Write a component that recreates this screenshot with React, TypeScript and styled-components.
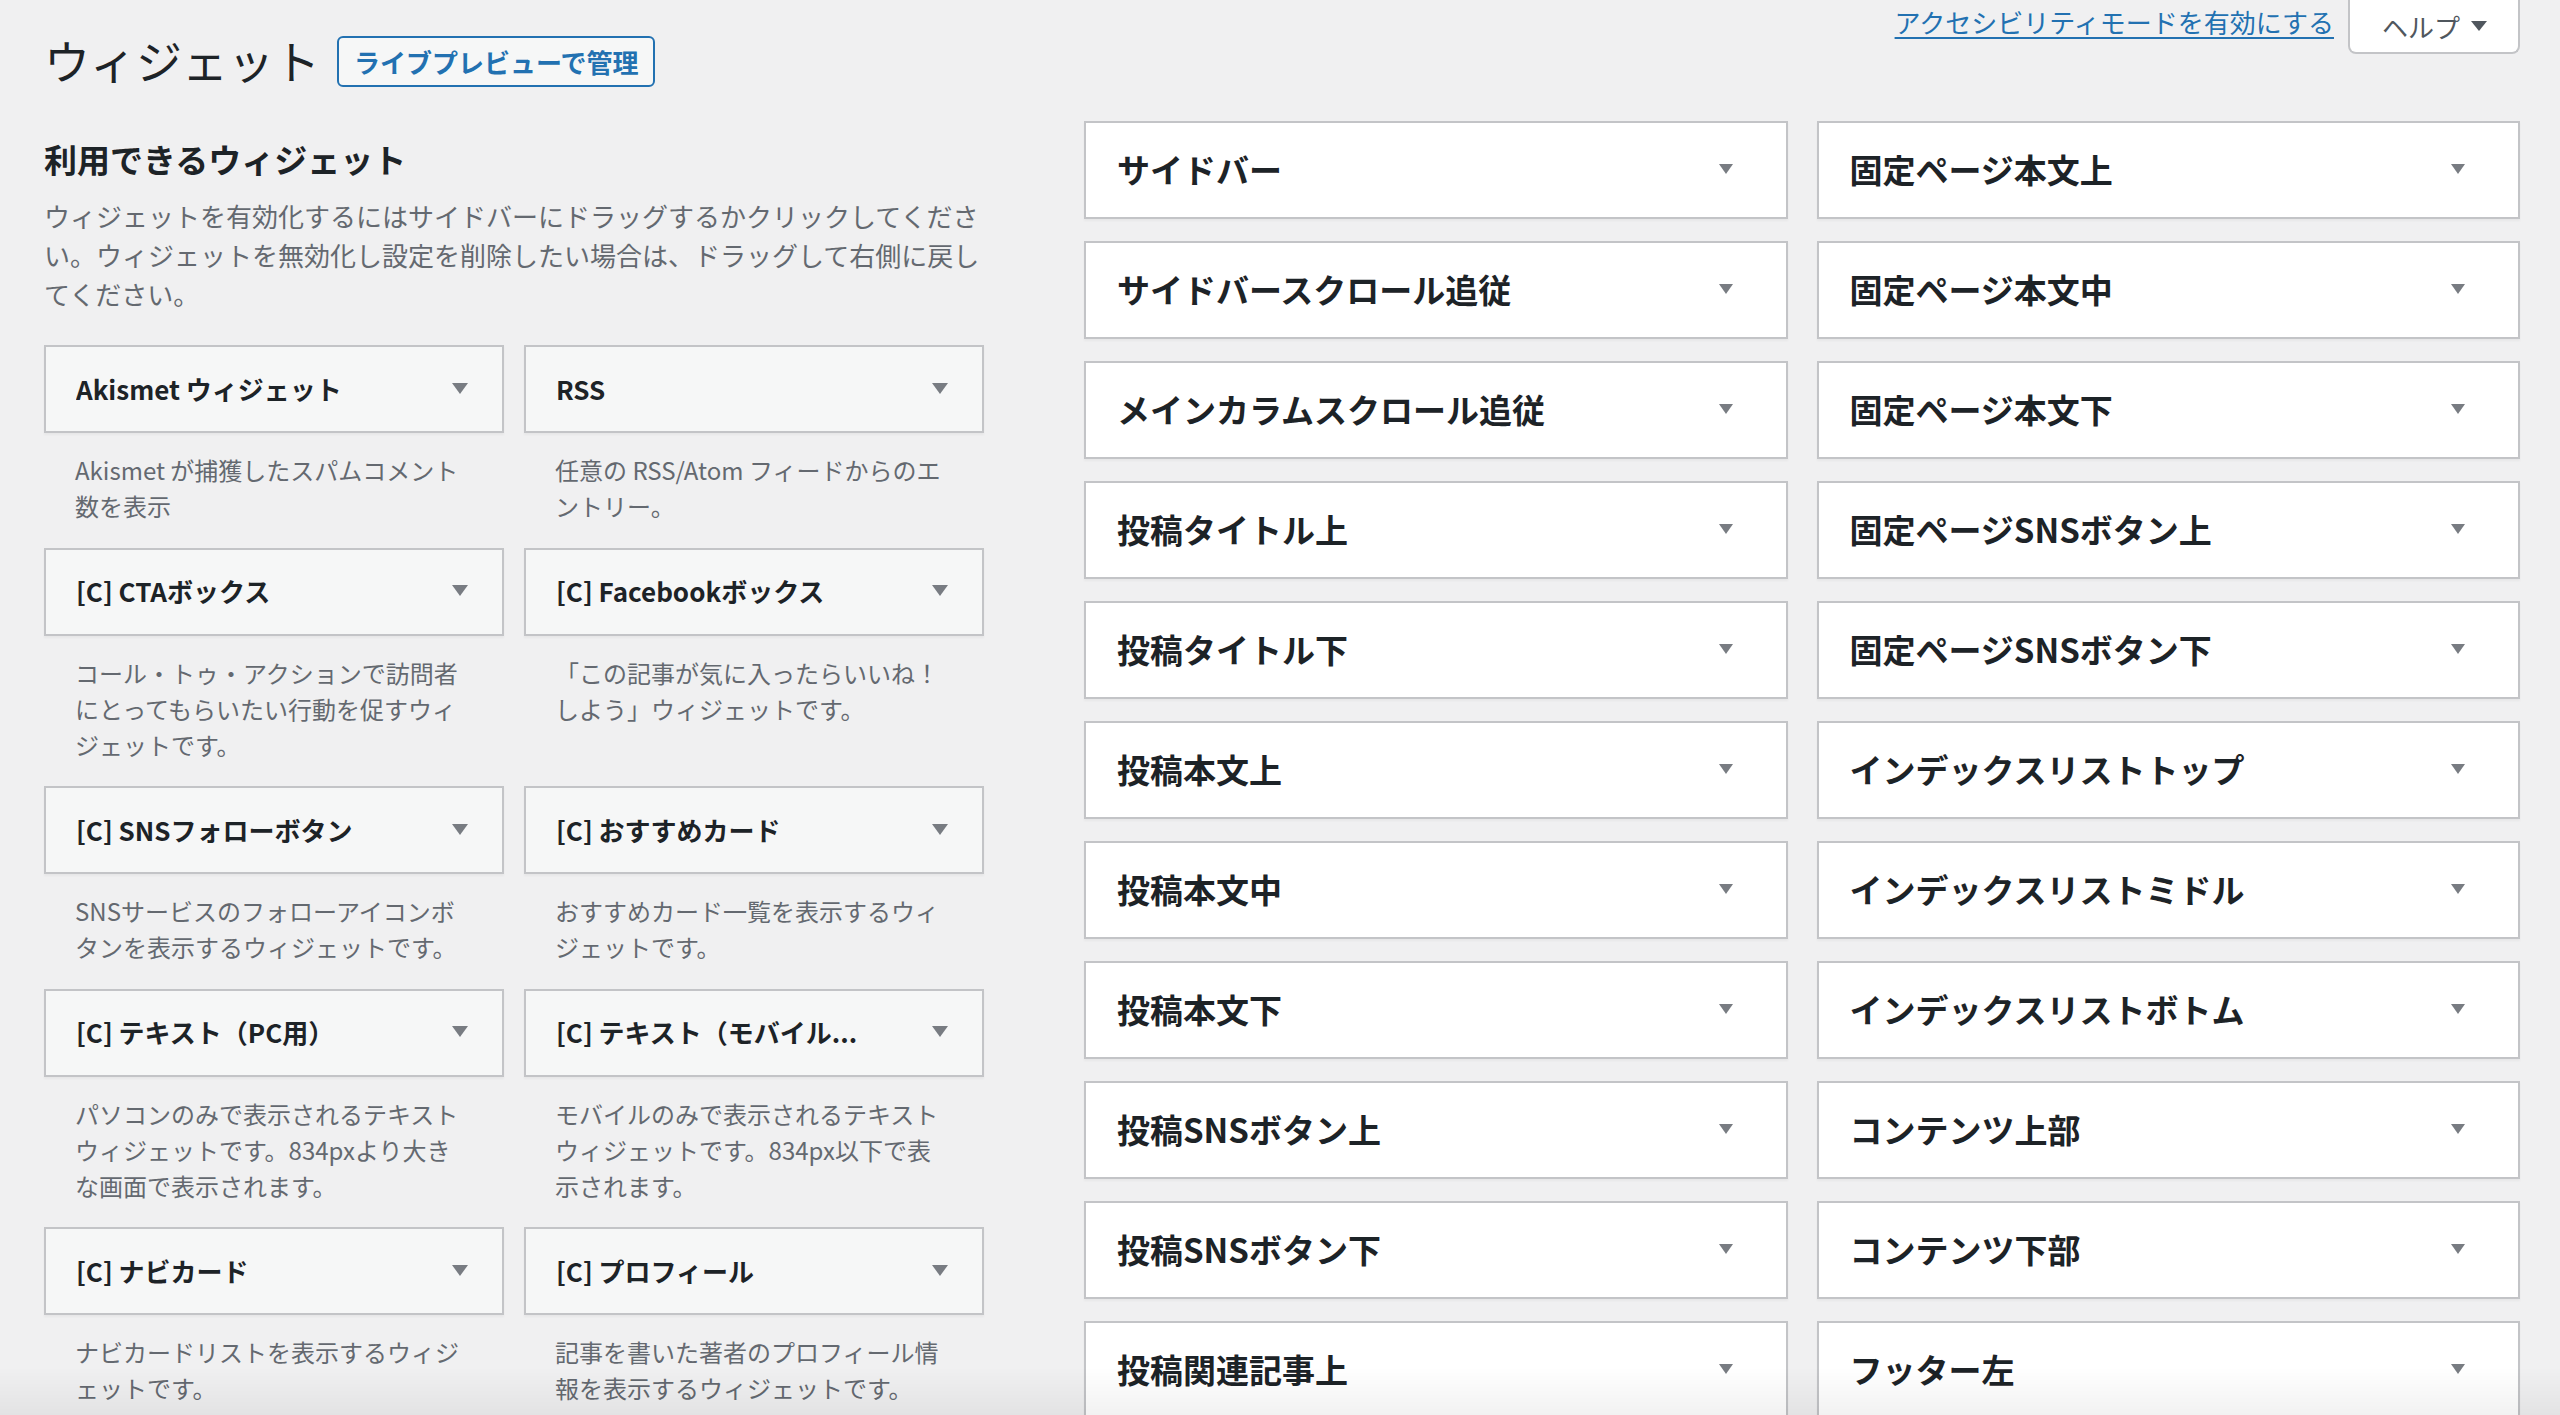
import styled, { createGlobalStyle } from "styled-components";

const GlobalStyle = createGlobalStyle`
  html,
  body {
    margin: 0;
    background: #f0f0f1;
    overflow: hidden;
  }
  body {
    font-family: "Noto Sans CJK JP", "Noto Sans", sans-serif;
    color: #1d2327;
  }
  * {
    box-sizing: border-box;
  }
`;

const Page = styled.div`
  padding: 0 40px 0 44px;
`;

const ScreenMeta = styled.div`
  float: right;
  display: flex;
  align-items: flex-start;
  gap: 14px;
`;

const A11yLink = styled.a`
  margin-top: 4px;
  font-size: 26px;
  line-height: 36px;
  color: #2271b1;
  text-decoration: underline;
  text-decoration-thickness: 2px;
  text-underline-offset: 4px;
  cursor: pointer;
`;

const HelpTab = styled.button`
  display: flex;
  align-items: center;
  gap: 11px;
  height: 54px;
  padding: 0 31px 0 32px;
  background: #fff;
  border: 2px solid #c3c4c7;
  border-top: none;
  border-radius: 0 0 8px 8px;
  font-family: inherit;
  font-size: 26px;
  color: #50575e;
  cursor: pointer;
`;

const Header = styled.div`
  display: flex;
  align-items: center;
  gap: 17px;
  padding-top: 29px;
`;

const Title = styled.h1`
  margin: 0;
  font-size: 46px;
  line-height: 60px;
  font-weight: 400;
  color: #1d2327;
`;

const ActionButton = styled.button`
  height: 51px;
  margin-top: 4px;
  padding: 0 15px;
  border: 2px solid #2271b1;
  border-radius: 6px;
  background: #f6f7f7;
  color: #2271b1;
  font-family: inherit;
  font-size: 26px;
  font-weight: 600;
  cursor: pointer;
`;

const Main = styled.div`
  clear: both;
  display: flex;
  align-items: flex-start;
  gap: 100px;
`;

const LeftColumn = styled.div`
  width: 940px;
  flex: none;
`;

const SectionTitle = styled.h2`
  margin: 45px 0 0;
  font-size: 33px;
  line-height: 51px;
  font-weight: 600;
  color: #1d2327;
`;

const Intro = styled.p`
  margin: 11px 0 0;
  font-size: 26px;
  line-height: 39px;
  color: #646970;
`;

const WidgetGrid = styled.div`
  margin-top: 32px;
  display: grid;
  grid-template-columns: 460px 460px;
  column-gap: 20px;
`;

const WidgetItem = styled.div`
  display: flex;
  flex-direction: column;
`;

const WidgetTop = styled.div`
  height: 88px;
  display: flex;
  align-items: center;
  justify-content: space-between;
  gap: 16px;
  padding: 0 34px 2px 30px;
  background: #f6f7f7;
  border: 2px solid #c3c4c7;
  box-shadow: 0 2px 2px rgba(0, 0, 0, 0.04);
`;

const WidgetTitle = styled.h3`
  margin: 0;
  font-size: 26px;
  font-weight: 600;
  color: #1d2327;
  white-space: nowrap;
  overflow: hidden;
  text-overflow: ellipsis;
`;

const WidgetDescription = styled.div`
  padding: 19px 36px 23.5px 31px;
  font-size: 24px;
  line-height: 36px;
  color: #646970;
`;

const SidebarGrid = styled.div`
  flex: 1;
  margin-top: 32px;
  display: grid;
  grid-template-columns: 1fr 1fr;
  column-gap: 29px;
  row-gap: 22px;
`;

const SidebarBox = styled.div`
  height: 98px;
  display: flex;
  align-items: center;
  justify-content: space-between;
  padding: 0 53px 2px 31px;
  background: #fff;
  border: 2px solid #c3c4c7;
  box-shadow: 0 2px 2px rgba(0, 0, 0, 0.04);
`;

const SidebarTitle = styled.h2`
  margin: 0;
  font-size: 33px;
  font-weight: 600;
  color: #1d2327;
  white-space: nowrap;
`;

const Toggle = styled.svg<{ $color: string }>`
  flex: none;
  fill: ${(p) => p.$color};
`;

const BottomFade = styled.div`
  position: fixed;
  left: 0;
  right: 0;
  bottom: 0;
  height: 48px;
  pointer-events: none;
  background: linear-gradient(rgba(0, 0, 0, 0), rgba(0, 0, 0, 0.05));
`;

const ArrowDown = ({ w, h, color = "#787c82" }: { w: number; h: number; color?: string }) => (
  <Toggle $color={color} width={w} height={h} viewBox="0 0 16 11" preserveAspectRatio="none">
    <polygon points="0,0 16,0 8,11" />
  </Toggle>
);

const widgets = [
  { title: "Akismet ウィジェット", desc: "Akismet が捕獲したスパムコメント数を表示" },
  { title: "RSS", desc: "任意の RSS/Atom フィードからのエントリー。" },
  { title: "[C] CTAボックス", desc: "コール・トゥ・アクションで訪問者にとってもらいたい行動を促すウィジェットです。" },
  { title: "[C] Facebookボックス", desc: "「この記事が気に入ったらいいね！しよう」ウィジェットです。" },
  { title: "[C] SNSフォローボタン", desc: "SNSサービスのフォローアイコンボタンを表示するウィジェットです。" },
  { title: "[C] おすすめカード", desc: "おすすめカード一覧を表示するウィジェットです。" },
  { title: "[C] テキスト（PC用）", desc: "パソコンのみで表示されるテキストウィジェットです。834pxより大きな画面で表示されます。" },
  { title: "[C] テキスト（モバイル...", desc: "モバイルのみで表示されるテキストウィジェットです。834px以下で表示されます。" },
  { title: "[C] ナビカード", desc: "ナビカードリストを表示するウィジェットです。" },
  { title: "[C] プロフィール", desc: "記事を書いた著者のプロフィール情報を表示するウィジェットです。" },
];

const sidebarsLeft = [
  "サイドバー",
  "サイドバースクロール追従",
  "メインカラムスクロール追従",
  "投稿タイトル上",
  "投稿タイトル下",
  "投稿本文上",
  "投稿本文中",
  "投稿本文下",
  "投稿SNSボタン上",
  "投稿SNSボタン下",
  "投稿関連記事上",
];

const sidebarsRight = [
  "固定ページ本文上",
  "固定ページ本文中",
  "固定ページ本文下",
  "固定ページSNSボタン上",
  "固定ページSNSボタン下",
  "インデックスリストトップ",
  "インデックスリストミドル",
  "インデックスリストボトム",
  "コンテンツ上部",
  "コンテンツ下部",
  "フッター左",
];

// interleave the two columns so the grid fills row by row
const sidebars = sidebarsLeft.flatMap((name, i) => [name, sidebarsRight[i]]);

const App = () => {
  return (
    <>
      <GlobalStyle />
      <Page>
        <ScreenMeta>
          <A11yLink>アクセシビリティモードを有効にする</A11yLink>
          <HelpTab>
            ヘルプ
            <ArrowDown w={16} h={10} color="#50575e" />
          </HelpTab>
        </ScreenMeta>
        <Header>
          <Title>ウィジェット</Title>
          <ActionButton>ライブプレビューで管理</ActionButton>
        </Header>
        <Main>
          <LeftColumn>
            <SectionTitle>利用できるウィジェット</SectionTitle>
            <Intro>
              ウィジェットを有効化するにはサイドバーにドラッグするかクリックしてください。ウィジェットを無効化し設定を削除したい場合は、ドラッグして右側に戻してください。
            </Intro>
            <WidgetGrid>
              {widgets.map((w) => (
                <WidgetItem key={w.title}>
                  <WidgetTop>
                    <WidgetTitle>{w.title}</WidgetTitle>
                    <ArrowDown w={16} h={11} />
                  </WidgetTop>
                  <WidgetDescription>{w.desc}</WidgetDescription>
                </WidgetItem>
              ))}
            </WidgetGrid>
          </LeftColumn>
          <SidebarGrid>
            {sidebars.map((name) => (
              <SidebarBox key={name}>
                <SidebarTitle>{name}</SidebarTitle>
                <ArrowDown w={14} h={10} />
              </SidebarBox>
            ))}
          </SidebarGrid>
        </Main>
      </Page>
      <BottomFade />
    </>
  );
};

export default App;
